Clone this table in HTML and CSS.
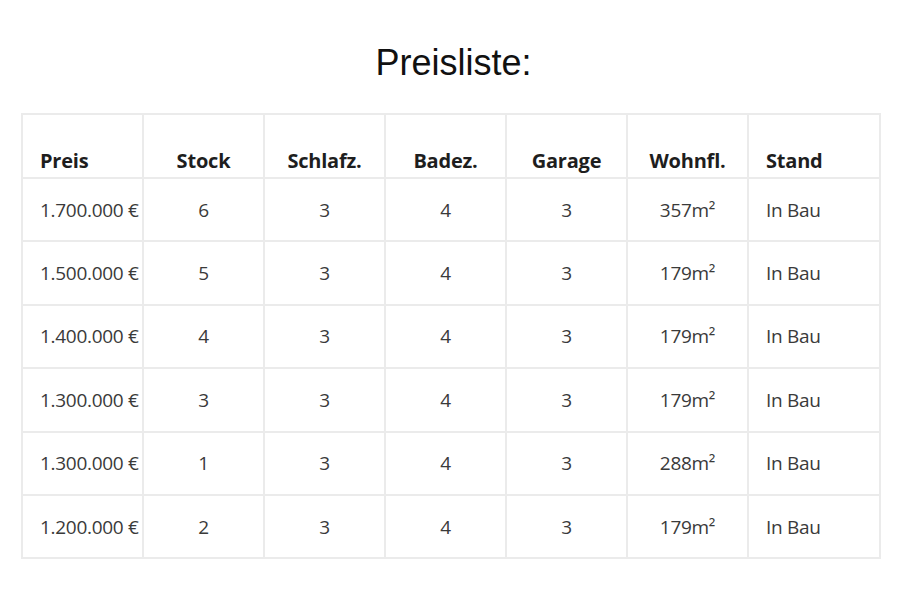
FILE: index.html
```html
<!DOCTYPE html>
<html lang="de">
<head>
<meta charset="utf-8">
<link rel="stylesheet" href="styles.css">
</head>
<body>
<div class="page">
  <h1 class="title">Preisliste:</h1>
  <table class="prices">
    <thead>
      <tr>
        <th class="left">Preis</th>
        <th>Stock</th>
        <th>Schlafz.</th>
        <th>Badez.</th>
        <th>Garage</th>
        <th>Wohnfl.</th>
        <th class="left">Stand</th>
      </tr>
    </thead>
    <tbody>
      <tr><td class="left">1.700.000 €</td><td>6</td><td>3</td><td>4</td><td>3</td><td>357m²</td><td class="left">In Bau</td></tr>
      <tr><td class="left">1.500.000 €</td><td>5</td><td>3</td><td>4</td><td>3</td><td>179m²</td><td class="left">In Bau</td></tr>
      <tr><td class="left">1.400.000 €</td><td>4</td><td>3</td><td>4</td><td>3</td><td>179m²</td><td class="left">In Bau</td></tr>
      <tr><td class="left">1.300.000 €</td><td>3</td><td>3</td><td>4</td><td>3</td><td>179m²</td><td class="left">In Bau</td></tr>
      <tr><td class="left">1.300.000 €</td><td>1</td><td>3</td><td>4</td><td>3</td><td>288m²</td><td class="left">In Bau</td></tr>
      <tr><td class="left">1.200.000 €</td><td>2</td><td>3</td><td>4</td><td>3</td><td>179m²</td><td class="left">In Bau</td></tr>
    </tbody>
  </table>
</div>
</body>
</html>
```
FILE: styles.css
```css
html, body {
  margin: 0;
  padding: 0;
  background: #ffffff;
}
.page {
  padding: 40px 20px 0 21px;
}
.title {
  margin: 0 0 27px 0;
  font-family: "Liberation Sans", Arial, sans-serif;
  font-weight: normal;
  font-size: 36px;
  line-height: 46px;
  color: #111;
  text-align: center;
  padding-left: 5px;
}
.prices {
  border-collapse: collapse;
  width: 860px;
  table-layout: fixed;
  font-family: "Open Sans", sans-serif;
}
.prices th, .prices td {
  border: 2px solid #ebebeb;
  width: 121px;
  text-align: center;
  padding: 0 4px;
  white-space: nowrap;
}
.prices th:last-child, .prices td:last-child {
  width: 132px;
}
.prices th {
  height: 64px;
  vertical-align: bottom;
  padding-bottom: 3px;
  font-weight: 700;
  font-size: 20px;
  letter-spacing: -0.2px;
  color: #1e1e1e;
  box-sizing: border-box;
}
.prices td {
  height: 63.4px;
  font-size: 19px;
  letter-spacing: -0.3px;
  color: #3a3a3a;
  box-sizing: border-box;
}
.prices .left {
  text-align: left;
  padding-left: 17px;
}
```
